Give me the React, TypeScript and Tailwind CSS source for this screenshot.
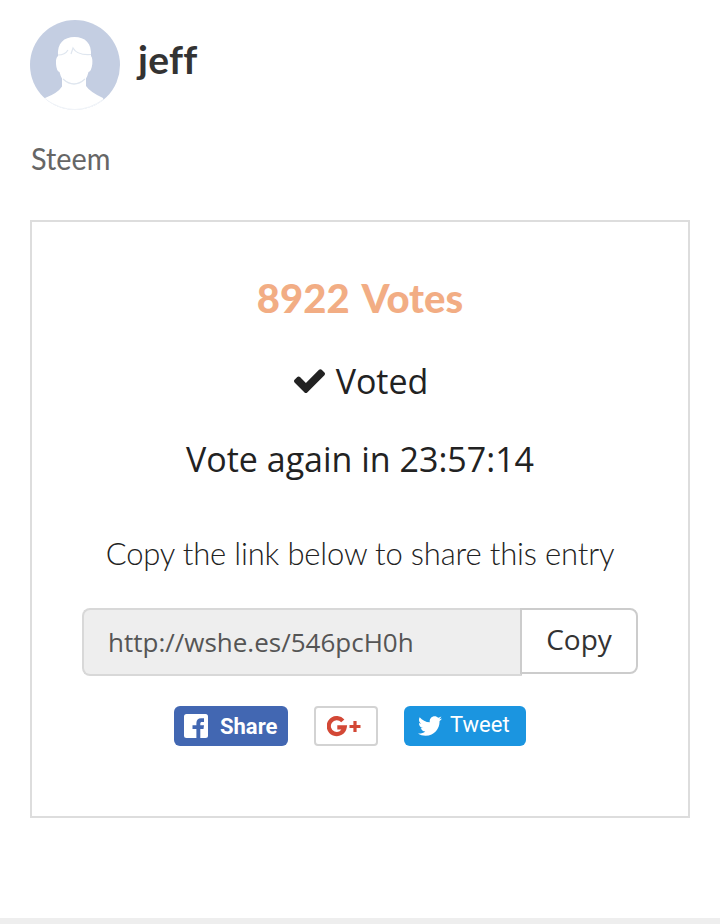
import { FaTwitter } from "react-icons/fa";

const Avatar = () => (
  <svg viewBox="0 0 90 90" className="h-[90px] w-[90px] shrink-0">
    <defs>
      <clipPath id="avatar-clip">
        <circle cx="45" cy="45" r="45" />
      </clipPath>
    </defs>
    <g clipPath="url(#avatar-clip)">
      <rect width="90" height="90" fill="#c4cee2" />
      <path
        d="M28 36C27 23 34 17 44.500 17S62 23 61 36Q62.800 38 62.300 44Q61.500 51 58.500 52Q57.500 56 56 58.500V66Q60 72 73 78V90H15V78Q28 73 32 66.500V58.500Q30.500 56 29.500 52Q26.500 51 26 44Q25.500 38 28 36Z"
        fill="#fff"
      />
      <path
        d="M28 35Q35 35 38 30M41 34L43 28Q47 35.500 61 34.500M33 59Q44 69 55 59"
        fill="none"
        stroke="#dfe6ef"
        strokeWidth="1.200"
      />
      <path d="M15 79Q45 100 74 79" fill="none" stroke="#eef2f7" strokeWidth="1" />
    </g>
  </svg>
);

const CheckIcon = () => (
  <svg viewBox="121 326 1550 1196" className="h-6 w-[31px]" fill="currentColor">
    <path d="M1671 566q0 40-28 68l-724 724-136 136q-28 28-68 28t-68-28l-136-136-362-362q-28-28-28-68t28-68l136-136q28-28 68-28t68 28l294 295 656-657q28-28 68-28t68 28l136 136q28 28 28 68z" />
  </svg>
);

const FacebookIcon = () => (
  <svg viewBox="0 0 24 24" className="size-6">
    <rect width="24" height="24" rx="2.500" fill="#fff" />
    <path
      d="M12.400 24V15H8.500V11.300H12.400V9C12.400 6 14.200 4.300 17 4.300H20V7.900H18.200C16.700 7.900 16.300 8.500 16.300 9.600V11.300H20L19.500 15H16.300V24Z"
      fill="#4267b2"
    />
  </svg>
);

const GooglePlusIcon = () => (
  <svg viewBox="0 0 34 21" className="h-[21px] w-[34px]" fill="none" stroke="#d34836">
    <path d="M15.800 4.800A8 8 0 1 0 17.700 11.300H10.300" strokeWidth="4.200" />
    <path d="M28 5V16M22.500 10.500H33.500" strokeWidth="3.200" />
  </svg>
);

const App = () => (
  <div className="flex h-[924px] w-[720px] flex-col overflow-hidden border-b-[6px] border-[#eee] bg-white px-[30px] pt-5 font-['Open_Sans',sans-serif] text-[#222] whitespace-nowrap">
    <div className="flex h-[90px] gap-[18px]">
      <Avatar />
      <h1 className="pt-[15px] font-['Lato',sans-serif] text-[39px] leading-[48px] font-bold tracking-[0.3px] text-[#333] [font-variant-ligatures:none]">
        jeff
      </h1>
    </div>
    <p className="mt-7 h-[82px] origin-left scale-x-[0.93] pl-px font-['Lato',sans-serif] text-[31px] leading-10 text-[#666]">
      Steem
    </p>

    <div className="flex h-[598px] flex-col items-center border-2 border-[#ddd] pt-[51px]">
      <h2 className="font-['Lato',sans-serif] text-[40px] leading-[50px] font-black text-[#f2ad84] [word-spacing:4px]">
        8922 Votes
      </h2>
      <div className="mt-[33px] flex h-[50px] items-center gap-[11px] pl-0.5 text-[34px]">
        <CheckIcon />
        <span>Voted</span>
      </div>
      <p className="mt-7 text-[34px] leading-[50px]">Vote again in 23:57:14</p>
      <p className="mt-[49px] font-['Lato',sans-serif] text-[31px] leading-10 font-light tracking-[-0.17px]">
        Copy the link below to share this entry
      </p>

      <div className="mt-[35px] flex w-[556px] items-start">
        <div className="h-[68px] w-[440px] rounded-l-lg border-2 border-[#d8d8d8] border-r-[#ccc] bg-[#eee] pl-6 text-[26px] leading-[64px] text-[#555]">
          http://wshe.es/546pcH0h
        </div>
        <button className="-ml-0.5 h-[66px] w-[118px] rounded-r-lg border-2 border-[#ccc] bg-white pb-1 text-[28px] leading-[58px] text-[#333]">
          Copy
        </button>
      </div>

      <div className="mt-[30px] mr-5 flex h-10 gap-[26px] font-['Roboto',sans-serif] text-white">
        <button className="flex w-[114px] items-center gap-3 rounded-md bg-[#4267b2] pl-2.5 text-[22px] font-bold">
          <FacebookIcon />
          Share
        </button>
        <button className="flex w-16 items-center rounded border-2 border-[#d3d3d3] pl-[11px]">
          <GooglePlusIcon />
        </button>
        <button className="flex w-[122px] items-center gap-2 rounded-md bg-[#1b95e0] pl-3.5 text-[22px]">
          <FaTwitter size={24} />
          <span className="-mt-1">Tweet</span>
        </button>
      </div>
    </div>
  </div>
);

export default App;
